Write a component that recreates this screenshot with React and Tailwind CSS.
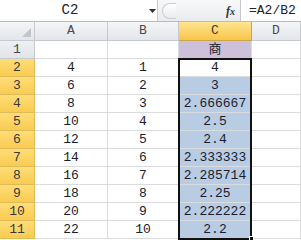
const rows = [
  ['4', '1', '4'],
  ['6', '2', '3'],
  ['8', '3', '2.666667'],
  ['10', '4', '2.5'],
  ['12', '5', '2.4'],
  ['14', '6', '2.333333'],
  ['16', '7', '2.285714'],
  ['18', '8', '2.25'],
  ['20', '9', '2.222222'],
  ['22', '10', '2.2'],
]

const font = { fontFamily: '"Liberation Mono", "Noto Sans CJK SC", monospace' }

function HeadCell({ children, active, className = '' }) {
  return (
    <div
      className={`flex h-[19px] items-center justify-center border-r border-b text-[13px] ${
        active
          ? 'border-[#c9a64a] bg-linear-to-b from-[#ffe590] to-[#f8c545] text-[#3a3a3a]'
          : 'border-[#c6c9ce] bg-linear-to-b from-[#f4f5f7] to-[#e3e6ea] text-[#4a4a4a]'
      } ${className}`}
    >
      {children}
    </div>
  )
}

function RowHead({ n, active }) {
  return (
    <div
      className={`flex h-[18px] w-[35px] shrink-0 items-center justify-center border-r border-b text-[13px] ${
        active
          ? 'border-[#e0bb58] bg-linear-to-b from-[#ffdd77] to-[#f9cb4f] text-[#3a3a3a]'
          : 'border-[#c6c9ce] bg-linear-to-b from-[#eef0f3] to-[#e1e4e8] text-[#4a4a4a]'
      }`}
    >
      {n}
    </div>
  )
}

function Cell({ children, className = '' }) {
  return (
    <div className={`flex h-[18px] items-center justify-center border-r border-b border-[#dadcdd] text-[13px] text-[#1c1c2c] ${className}`}>
      {children}
    </div>
  )
}

export default function App() {
  return (
    <div className="relative h-[240px] w-[301px] overflow-hidden bg-white" style={font}>
      {/* formula bar */}
      <div className="flex h-[22px] border-b border-[#b8bcc2] bg-linear-to-b from-[#f7f8fa] to-[#e9ecef]">
        <div className="relative flex w-[158px] shrink-0 items-center border-r border-[#c6c9ce] bg-white">
          <span className="w-[140px] text-center text-[14px] text-[#222]">C2</span>
          <svg className="absolute left-[149px] top-[9px]" width="7" height="4" viewBox="0 0 7 4">
            <path d="M0 0h7L3.5 4z" fill="#333" />
          </svg>
        </div>
        <div className="flex flex-1 items-center">
          <div className="ml-[4px] h-[16px] w-[14px] rounded-l-full border border-r-0 border-[#c9ccd1] bg-linear-to-b from-white to-[#e8eaed]" />
          <span
            className="ml-auto mr-[5px] text-[12px] font-bold italic text-[#333]"
            style={{ fontFamily: '"Liberation Serif", serif' }}
          >
            f<span className="text-[10px]">x</span>
          </span>
        </div>
        <div className="flex w-[61px] shrink-0 items-center border-l border-[#c6c9ce] bg-white pl-[8px] text-[13px] text-[#222]">
          =A2/B2
        </div>
      </div>

      {/* column headers */}
      <div className="flex">
        <div className="relative h-[19px] w-[35px] shrink-0 border-r border-b border-[#c6c9ce] bg-linear-to-b from-[#f4f5f7] to-[#e3e6ea]">
          <svg className="absolute right-[3px] bottom-[3px]" width="9" height="9" viewBox="0 0 9 9">
            <path d="M9 0v9H0z" fill="#c3c6cb" />
          </svg>
        </div>
        <HeadCell className="w-[73px]">A</HeadCell>
        <HeadCell className="w-[71px]">B</HeadCell>
        <HeadCell className="w-[73px]" active>C</HeadCell>
        <HeadCell className="flex-1">D</HeadCell>
      </div>

      {/* row 1 */}
      <div className="flex">
        <RowHead n={1} />
        <Cell className="w-[73px]" />
        <Cell className="w-[71px]" />
        <Cell className="w-[73px] bg-[#ccc0da]">商</Cell>
        <Cell className="flex-1" />
      </div>

      {rows.map(([a, b, c], i) => (
        <div className="flex" key={i}>
          <RowHead n={i + 2} active />
          <Cell className="w-[73px]">{a}</Cell>
          <Cell className="w-[71px]">{b}</Cell>
          <Cell className={`w-[73px] ${i === 0 ? 'bg-white' : 'bg-[#b8cce4] border-[#b8cce4]'}`}>{c}</Cell>
          <Cell className="flex-1" />
        </div>
      ))}

      {/* selection outline */}
      <div className="pointer-events-none absolute left-[178px] top-[58px] h-[182px] w-[74px] border-2 border-[#111]" />
      <div className="absolute left-[249px] top-[236px] h-[5px] w-[5px] border border-white bg-[#111]" />
    </div>
  )
}
